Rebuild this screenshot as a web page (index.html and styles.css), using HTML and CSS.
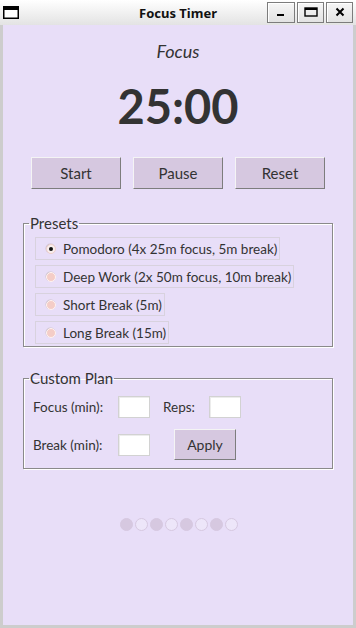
FILE: index.html
```html
<!DOCTYPE html>
<html lang="en">
<head>
    <meta charset="UTF-8">
    <title>Focus Timer</title>
    <link rel="stylesheet" href="styles.css">
</head>
<body>
<div class="window">
    <div class="titlebar">
        <svg class="app-icon" width="16" height="13" viewBox="0 0 16 13">
            <rect x="0.75" y="0.75" width="14.5" height="11.5" fill="#fff" stroke="#000" stroke-width="1.5"/>
            <rect x="0" y="0" width="16" height="4" fill="#000"/>
        </svg>
        <div class="title">Focus Timer</div>
        <div class="controls">
            <span class="wbtn">
                <svg width="10" height="10" viewBox="0 0 10 10"><rect x="1" y="7" width="7" height="2" fill="#000"/></svg>
            </span>
            <span class="wbtn">
                <svg width="14" height="10" viewBox="0 0 14 10"><rect x="1" y="1" width="12" height="8" fill="none" stroke="#000" stroke-width="1.4"/><rect x="1" y="1" width="12" height="2" fill="#000"/></svg>
            </span>
            <span class="wbtn">
                <svg width="10" height="10" viewBox="0 0 10 10"><path d="M1.5 1.5 L8.5 8.5 M8.5 1.5 L1.5 8.5" stroke="#000" stroke-width="2"/></svg>
            </span>
        </div>
    </div>

    <div class="content">
        <div class="mode">Focus</div>
        <div class="clock">25:00</div>

        <div class="actions">
            <button class="btn">Start</button>
            <button class="btn">Pause</button>
            <button class="btn">Reset</button>
        </div>

        <fieldset class="group presets">
            <legend>Presets</legend>
            <label class="preset"><span class="radio on"></span>Pomodoro (4x 25m focus, 5m break)</label>
            <label class="preset"><span class="radio"></span>Deep Work (2x 50m focus, 10m break)</label>
            <label class="preset"><span class="radio"></span>Short Break (5m)</label>
            <label class="preset"><span class="radio"></span>Long Break (15m)</label>
        </fieldset>

        <fieldset class="group custom">
            <legend>Custom Plan</legend>
            <div class="row">
                <span class="field-label">Focus (min):</span>
                <input class="entry" type="text">
                <span class="field-label reps">Reps:</span>
                <input class="entry" type="text">
            </div>
            <div class="row">
                <span class="field-label">Break (min):</span>
                <input class="entry" type="text">
                <button class="btn apply">Apply</button>
            </div>
        </fieldset>

        <div class="dots">
            <span class="dot full"></span>
            <span class="dot"></span>
            <span class="dot full"></span>
            <span class="dot"></span>
            <span class="dot full"></span>
            <span class="dot"></span>
            <span class="dot full"></span>
            <span class="dot"></span>
        </div>
    </div>
</div>
</body>
</html>
```

FILE: styles.css
```css
* {
    box-sizing: border-box;
}

body {
    margin: 0;
    background: #cdcdcd;
    font-family: Lato, "Noto Sans", sans-serif;
    color: #333;
}

.window {
    width: 356px;
    height: 628px;
    display: flex;
    flex-direction: column;
}

/* title bar */
.titlebar {
    height: 25px;
    display: grid;
    grid-template-columns: 1fr auto 1fr;
    align-items: center;
    padding: 0 3px;
    background: linear-gradient(#ffffff, #e3e3e3);
}

.app-icon {
    display: block;
    margin-top: -1px;
}

.title {
    font-family: "Noto Sans", sans-serif;
    font-weight: bold;
    font-size: 13px;
    color: #111;
}

.controls {
    display: flex;
    justify-content: flex-end;
    gap: 2px;
    margin-top: -1px;
}

.wbtn {
    width: 27px;
    height: 21px;
    display: flex;
    align-items: center;
    justify-content: center;
    border: 1px solid #7c7c7c;
    box-shadow: inset 1px 1px 0 #fff;
    background: linear-gradient(#f6f6f6, #e2e2e2);
}

.wbtn:first-child {
    width: 28px;
}

/* main area */
.content {
    flex: 1;
    margin: 0 3px 3px;
    background: #e8def8;
    display: flex;
    flex-direction: column;
}

.mode {
    padding-top: 15px;
    text-align: center;
    font-style: italic;
    font-size: 18px;
    line-height: 22px;
}

.clock {
    margin-top: 19px;
    text-align: center;
    font-weight: bold;
    font-size: 47px;
    line-height: 50px;
}

.actions {
    margin-top: 26px;
    display: flex;
    justify-content: center;
    gap: 12px;
}

.btn {
    width: 90px;
    height: 32px;
    padding: 0;
    font-family: Lato, sans-serif;
    font-size: 15px;
    color: #333;
    background: #d6c8e0;
    border: 1px solid;
    border-color: #f4f4f4 #7d7d7d #7d7d7d #f4f4f4;
}

/* group boxes */
.group {
    margin: 0 20px;
    border: 1px solid #8a8a8a;
    box-shadow: 1px 1px 0 #fff, inset 1px 1px 0 #fff;
    min-width: 0;
}

.group legend {
    font-size: 15px;
    line-height: 18px;
    padding: 0 1px;
}

.presets {
    margin-top: 25px;
    padding: 5px 0 2px 11px;
    display: flex;
    flex-direction: column;
    gap: 5px;
}

.presets legend {
    margin-left: -6px;
}

.preset {
    display: flex;
    align-items: center;
    width: fit-content;
    height: 23px;
    padding: 0 2px 0 10px;
    border: 1px solid #d8d2de;
    font-size: 13.5px;
}

.radio {
    flex-shrink: 0;
    display: flex;
    align-items: center;
    justify-content: center;
    width: 10px;
    height: 10px;
    margin-right: 7px;
    border-radius: 50%;
    background: #f4cdc7;
    border: 1px solid #fff4f2;
    box-shadow: -0.5px -0.5px 0 #cfc3cf;
}

.radio.on {
    background: #f8eeee;
    border-color: #f0d0cc;
}

.radio.on::after {
    content: "";
    width: 4px;
    height: 4px;
    border-radius: 50%;
    background: #111;
}

.custom {
    margin-top: 22px;
    padding: 9px 0 8px 9px;
    display: flex;
    flex-direction: column;
    gap: 11px;
}

.custom legend {
    margin-left: -4px;
}

.row {
    display: flex;
    align-items: center;
}

.field-label {
    width: 85px;
    font-size: 13.5px;
}

.field-label.reps {
    width: 46px;
    margin-left: 13px;
}

.entry {
    width: 32px;
    height: 22px;
    padding: 0;
    background: #fff;
    border: 1px solid #d2d2d2;
    box-shadow: inset 1px 1px 0 #ececec;
}

.btn.apply {
    width: 62px;
    height: 31px;
    margin-left: 24px;
    font-size: 14px;
}

/* cycle dots */
.dots {
    margin-top: 49px;
    display: flex;
    justify-content: center;
    gap: 2px;
    padding-left: 2px;
}

.dot {
    width: 13px;
    height: 13px;
    border-radius: 50%;
    background: #ede6f9;
    border: 1px solid #d6c8e0;
}

.dot.full {
    background: #d6c8e0;
}
```
